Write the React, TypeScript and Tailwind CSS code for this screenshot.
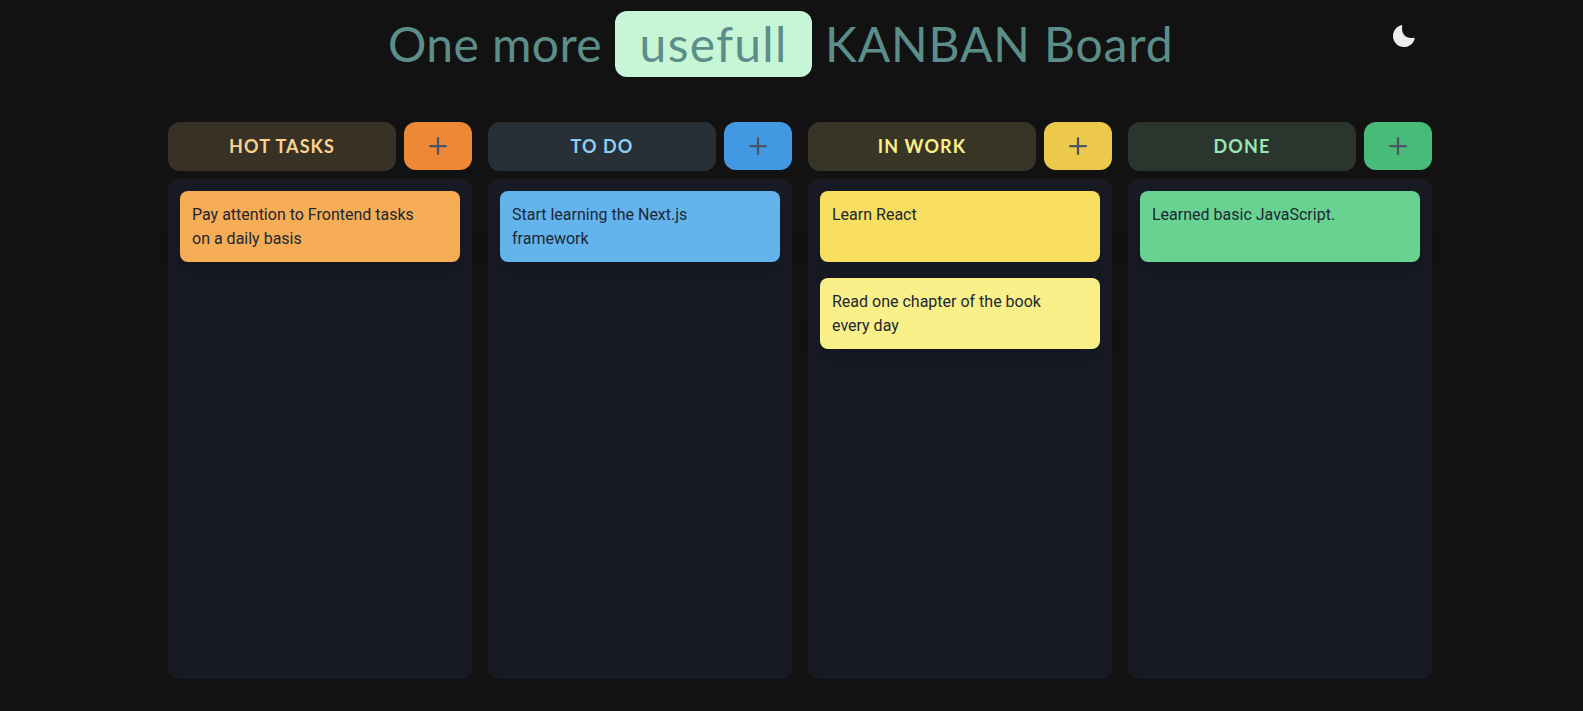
const columns = [
  { title: "HOT TASKS", headBg: "bg-[#373126]", headText: "text-[#fbd38d]", addBg: "bg-[#ed8936]", cards: [{ text: ["Pay attention to Frontend tasks", "on a daily basis"], bg: "bg-[#f6ad55]" }] },
  { title: "TO DO", headBg: "bg-[#263036]", headText: "text-[#90cdf4]", addBg: "bg-[#4299e1]", cards: [{ text: ["Start learning the Next.js", "framework"], bg: "bg-[#63b3ed]" }] },
  { title: "IN WORK", headBg: "bg-[#383526]", headText: "text-[#faf089]", addBg: "bg-[#ecc94b]", cards: [
    { text: ["Learn React"], bg: "bg-[#f9df5f]" },
    { text: ["Read one chapter of the book", "every day"], bg: "bg-[#faf089]" },
  ] },
  { title: "DONE", headBg: "bg-[#2a352d]", headText: "text-[#9ae6b4]", addBg: "bg-[#48bb78]", cards: [{ text: ["Learned basic JavaScript."], bg: "bg-[#68d391]" }] },
];

function Plus() {
  return (
    <svg viewBox="0 0 24 24" className="w-[18px] h-[18px]" fill="#4a5568">
      <path d="M0,12a1.5,1.5,0,0,0,1.5,1.5h8.75a.25.25,0,0,1,.25.25V22.5a1.5,1.5,0,0,0,3,0V13.75a.25.25,0,0,1,.25-.25H22.5a1.5,1.5,0,0,0,0-3H13.75a.25.25,0,0,1-.25-.25V1.5a1.5,1.5,0,0,0-3,0v8.75a.25.25,0,0,1-.25.25H1.5A1.5,1.5,0,0,0,0,12Z" />
    </svg>
  );
}

function Moon() {
  return (
    <svg viewBox="0 0 24 24" className="w-6 h-6" fill="#eeeeee">
      <path d="M21.4,13.7C20.6,13.9,19.8,14,19,14c-5,0-9-4-9-9c0-0.8,0.1-1.6,0.3-2.4c0.1-0.3,0-0.7-0.3-1c-0.3-0.3-0.6-0.4-1-0.3C4.3,2.7,1,7.1,1,12c0,6.1,4.9,11,11,11c4.9,0,9.3-3.3,10.6-8.1c0.1-0.3,0-0.7-0.3-1C22.1,13.7,21.7,13.6,21.4,13.7z" />
    </svg>
  );
}

export default function App() {
  return (
    <div className="h-[711px] overflow-hidden bg-[#121212] font-['Lato',sans-serif]">
      <header className="flex items-start pt-[11px] pl-[388px] pr-[167px] h-[122px]">
        <h1 className="flex items-center text-[48px] leading-[66px] font-normal text-[#5c8e89] whitespace-nowrap">
          <span className="tracking-[0.4px]">One more</span>
          <span className="bg-[#c6f6d5] rounded-xl w-[197px] h-[66px] ml-[13px] mr-[13px] text-center tracking-[1.3px]">usefull</span>
          <span className="tracking-[0.85px]">KANBAN Board</span>
        </h1>
        <div className="ml-auto mt-[13px]"><Moon /></div>
      </header>
      <main className="flex gap-4 pl-[168px]">
        {columns.map((c) => (
          <section key={c.title} className="w-[304px] flex flex-col gap-2">
            <div className="flex gap-2 items-start">
              <div className={`w-[228px] h-[49px] rounded-xl flex items-center justify-center text-lg font-bold tracking-[1.1px] pb-[2px] ${c.headBg} ${c.headText}`}>
                {c.title}
              </div>
              <button className={`w-[68px] h-12 rounded-xl flex items-center justify-center ${c.addBg}`}>
                <Plus />
              </button>
            </div>
            <div className="h-[500px] rounded-[10px] bg-[#171923] p-3 flex flex-col gap-4">
              {c.cards.map((k) => (
                <div key={k.text[0]} className={`h-[71px] rounded-lg px-3 py-3 text-base leading-6 text-[#202735] font-['Roboto',sans-serif] shadow-[0_20px_25px_-5px_rgba(0,0,0,0.08),0_10px_10px_-5px_rgba(0,0,0,0.03)] ${k.bg}`}>
                  {k.text.map((t) => <div key={t}>{t}</div>)}
                </div>
              ))}
            </div>
          </section>
        ))}
      </main>
    </div>
  );
}
